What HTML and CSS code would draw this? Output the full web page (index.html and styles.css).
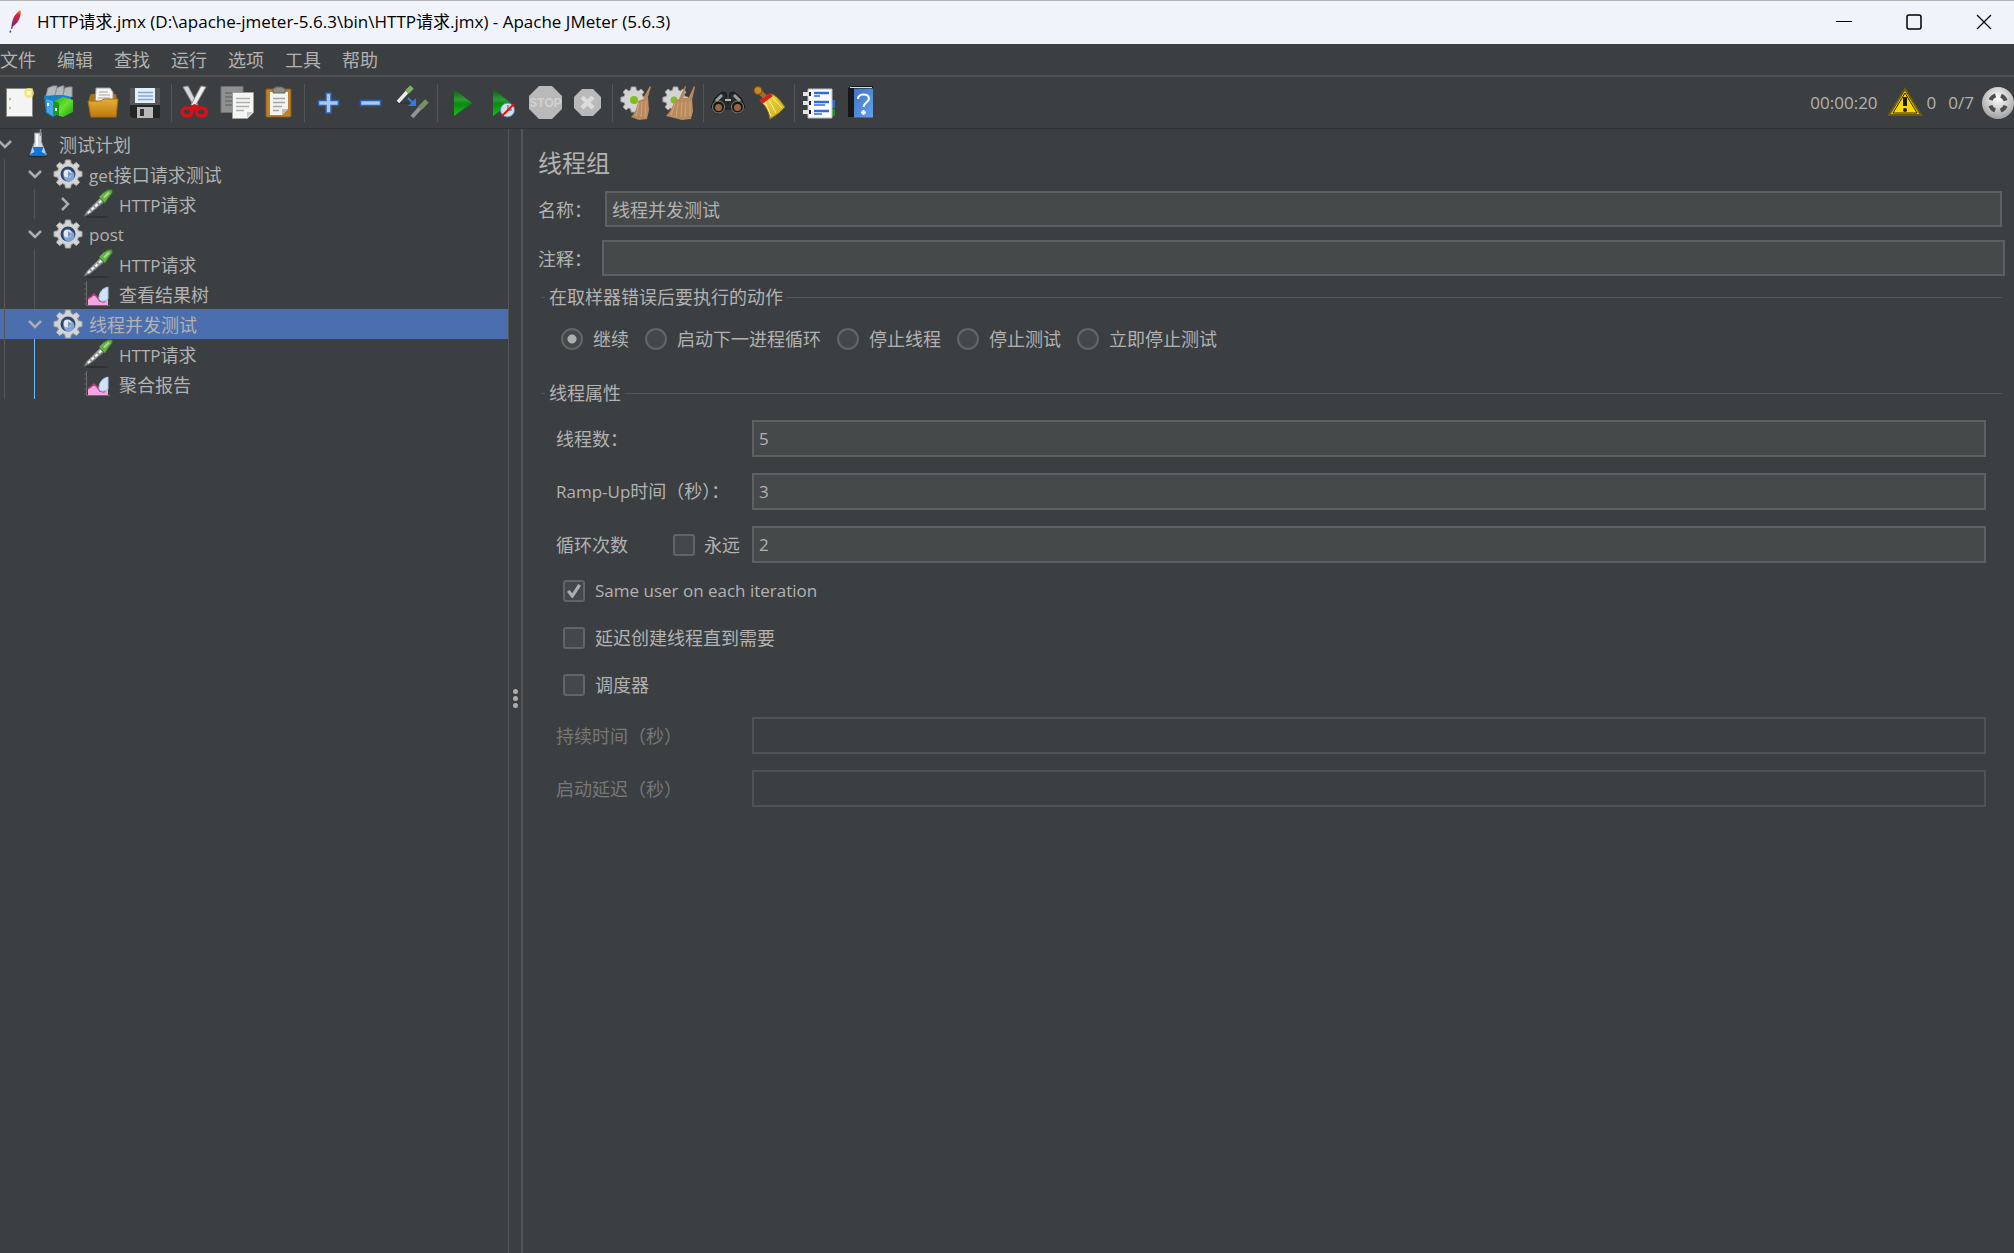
FILE: index.html
```html
<!DOCTYPE html>
<html lang="zh-CN">
<head>
<meta charset="utf-8">
<title>HTTP请求.jmx - Apache JMeter (5.6.3)</title>
<link rel="stylesheet" href="styles.css">
</head>
<body>
<svg class="defs" aria-hidden="true">
  <defs>
    <linearGradient id="gPlay" x1="0" y1="0" x2="0" y2="1"><stop offset="0" stop-color="#0a5c12"/><stop offset=".4" stop-color="#2c9a34"/><stop offset=".55" stop-color="#0a8a10"/><stop offset="1" stop-color="#12c412"/></linearGradient>
    <linearGradient id="gFolder" x1="0" y1="0" x2="0" y2="1"><stop offset="0" stop-color="#e8ad35"/><stop offset="1" stop-color="#b87a10"/></linearGradient>
    <linearGradient id="gBroom" x1="0" y1="0" x2="1" y2="1"><stop offset="0" stop-color="#f4e04a"/><stop offset="1" stop-color="#c9a514"/></linearGradient>
    <linearGradient id="gHelp" x1="0" y1="0" x2="1" y2="1"><stop offset="0" stop-color="#3f74c4"/><stop offset="1" stop-color="#62a0ea"/></linearGradient>
    <linearGradient id="gGreen" x1="0" y1="0" x2="1" y2="1"><stop offset="0" stop-color="#1fb01a"/><stop offset=".5" stop-color="#6be02c"/><stop offset="1" stop-color="#1c9a14"/></linearGradient>
    <linearGradient id="gFeather" x1="0" y1="1" x2="0" y2="0"><stop offset="0" stop-color="#5b2a78"/><stop offset=".4" stop-color="#b01f5e"/><stop offset=".7" stop-color="#d8232e"/><stop offset="1" stop-color="#f69923"/></linearGradient>
    <radialGradient id="gBall" cx=".5" cy=".35" r=".7"><stop offset="0" stop-color="#fff"/><stop offset="1" stop-color="#9a9a9a"/></radialGradient>
    <symbol id="gear" viewBox="0 0 30 30">
      <path d="M12.500 1h5l.7 3.600 2.200.9 3-2.100 3.200 3.200-2.100 3 .9 2.200 3.600.7v5l-3.600.7-.9 2.200 2.100 3-3.200 3.200-3-2.100-2.200.9-.7 3.600h-5l-.7-3.600-2.200-.9-3 2.100-3.200-3.200 2.100-3-.9-2.200L1 17.500v-5l3.600-.7.9-2.200-2.100-3 3.200-3.200 3 2.100 2.200-.9z" fill="#d4d4d4" stroke="#a4a4a4"/>
      <circle cx="15" cy="15" r="7.500" fill="#2c4674"/><circle cx="16" cy="17" r="5.500" fill="#7ea3d8"/><circle cx="14.500" cy="14.500" r="4" fill="#e3e8ee"/><path d="M15 12l4 3-4 4z" fill="#7d95b8"/>
    </symbol>
    <symbol id="pipette" viewBox="0 0 30 30">
      <ellipse cx="14" cy="28" rx="12" ry="1" fill="#2e3132"/>
      <path d="M1 27l3-5L17 9l4 4L8 24l-6 3z" fill="#989b9a" stroke="#626665"/>
      <path d="M5 24l14-13" stroke="#fff" stroke-width="2" stroke-dasharray="3 2"/>
      <path d="M16 8l6 6 3-5 4-5V1h-4l-5 3z" fill="#68b048" stroke="#3e7f2c"/>
      <path d="M21 8.500l5-5" stroke="#a4dc88" stroke-width="2"/>
    </symbol>
    <symbol id="graph" viewBox="0 0 30 30">
      <path d="M3.500 2v24.500H27" fill="none" stroke="#6a6d6e"/><path d="M1 5h2M1 10h2M1 15h2M1 20h2M1 25h2" stroke="#5d6061"/>
      <path d="M5 26v-7l3-1 3-3 3 3 3 2 4-3 4-3v12z" fill="#f3a6e4"/><path d="M5 20l3-2 3-3 3 3 3 4 4 1 4-5" fill="none" stroke="#c8387f" stroke-width="1.500"/>
      <path d="M25 8v12c-3 3-9 3-9-1 0-6 4-10 9-11z" fill="#cfe4fb" stroke="#a5c5ec"/>
    </symbol>
    <symbol id="flask" viewBox="0 0 30 30">
      <ellipse cx="15" cy="27" rx="10" ry="1.500" fill="#252829"/>
      <path d="M11.500 4h7v9l5 13H7l4.500-13z" fill="#d5d9dc" stroke="#8f9496"/>
      <path d="M10 18h10l3 8.500H7z" fill="#1273de"/><path d="M7.500 25l2-7 2 5zM22.500 25l-2-7-2 5z" fill="#a9d2ff"/>
      <path d="M17.500 0v7" stroke="#8a8d8f" stroke-width="1.500"/><path d="M14 5v12" stroke="#fff" stroke-width="2"/>
    </symbol>
    <symbol id="down" viewBox="0 0 16 16"><path d="M2 5l6 6 6-6" fill="none" stroke="#adadad" stroke-width="2.500"/></symbol>
    <symbol id="right" viewBox="0 0 16 16"><path d="M5 2l6 6-6 6" fill="none" stroke="#adadad" stroke-width="2.500"/></symbol>
  </defs>
</svg>

<header class="titlebar">
  <svg class="feather" width="14" height="26" viewBox="0 0 14 26"><path d="M1 23.500L3.500 17" stroke="#4b3f8c" stroke-width="1.500" stroke-dasharray="2 2"/><path d="M2.500 18.500C2.500 11 6 4 11.500 1c1 4-1 12-7 16z" fill="url(#gFeather)"/></svg>
  <h1 class="title">HTTP请求.jmx (D:\apache-jmeter-5.6.3\bin\HTTP请求.jmx) - Apache JMeter (5.6.3)</h1>
  <div class="window-controls">
    <button aria-label="最小化"><svg width="16" height="16"><path d="M0 7.500h16" stroke="#000"/></svg></button>
    <button aria-label="最大化"><svg width="16" height="16"><rect x="1" y="1" width="14" height="14" rx="2" fill="none" stroke="#000" stroke-width="1.500"/></svg></button>
    <button aria-label="关闭"><svg width="16" height="16"><path d="M1 1l14 14M15 1L1 15" stroke="#000" stroke-width="1.250"/></svg></button>
  </div>
</header>

<nav class="menubar">
  <button>文件</button><button>编辑</button><button>查找</button><button>运行</button><button>选项</button><button>工具</button><button>帮助</button>
</nav>

<div class="toolbar" role="toolbar">
  <button aria-label="新建"><svg viewBox="0 0 34 34"><path d="M2.500 2.500h26v28h-26z" fill="#f4f4f4" stroke="#8b8b85"/><path d="M5 12l2 1-2 1M5 21l2 1-2 1" stroke="#aaa" fill="none"/><circle cx="25" cy="7" r="5" fill="#f3e36a" opacity=".8"/><circle cx="25" cy="7" r="2" fill="#fffbd0"/></svg></button>
  <button aria-label="模板"><svg viewBox="0 0 34 34"><path d="M-2 10l11-5 16-4v20L7 31l-7-4z" fill="#1d7fc4"/><path d="M0 10l2-8 5-2h4l-2 9M9 9l2-7 5-2h2l-1 9M17 9l2-7 4-1h3v10" fill="#b3b9bc" stroke="#8d9498"/><path d="M0 13l7 2v15l-6-4z" fill="#48a7e8"/><path d="M8 15l9-4 10 3v12l-10 5-9-3z" fill="url(#gGreen)"/><path d="M8 15l5 2v13l-5-2z" fill="#159a1c"/><path d="M10 22v3M2 17v3" stroke="#fff" stroke-width="2"/></svg></button>
  <button aria-label="打开"><svg viewBox="0 0 34 34"><path d="M1 12l2-4h25l1 7v14H2z" fill="#a8731a"/><path d="M8 2h14l3 4v12H7z" fill="#f4f4f4" stroke="#999"/><path d="M11 6h9M11 9h11M10 12h12" stroke="#a5a5a5"/><path d="M0 15h13l3-2h14l-2 18H3z" fill="url(#gFolder)" stroke="#a96f0c"/></svg></button>
  <button aria-label="保存"><svg viewBox="0 0 34 34"><path d="M0 2h30v30H2l-2-2z" fill="#55565a"/><path d="M0 19h30v13H2l-2-2z" fill="#242527"/><path d="M5 2h20v15H5z" fill="#e4effa"/><path d="M8 6.500h15M8 10h15M8 13.500h15" stroke="#86a9d2" stroke-width="1.500"/><path d="M7 21h16v11H7z" fill="#b9b9b7"/><path d="M10 23h4v7h-4z" fill="#343434"/></svg></button>
  <span class="sep"></span>
  <button aria-label="剪切"><svg viewBox="0 0 34 34"><path d="M4 1l5-1 10 19-3 3z" fill="#d8d8d8" stroke="#8d8d8d"/><path d="M27 1l-5-1-10 19 3 3z" fill="#efefef" stroke="#8d8d8d"/><ellipse cx="8" cy="26" rx="5" ry="4" fill="none" stroke="#d41217" stroke-width="3.500"/><ellipse cx="22.500" cy="26" rx="5" ry="4" fill="none" stroke="#d41217" stroke-width="3.500"/><path d="M9 21l6.500-3 6.500 3-6.500 4z" fill="#d41217"/></svg></button>
  <button aria-label="复制"><svg viewBox="0 0 34 34"><path d="M0 .5h22v26H0z" fill="#8f9191" stroke="#6f7171"/><path d="M4 7h13M4 11h8M4 15h7M4 19h7" stroke="#6b6d6d" stroke-width="1.500"/><path d="M11.500 6.500h21v20l-6 6h-15z" fill="#f5f5f3" stroke="#9d9d9b"/><path d="M15 12.500h14M15 16.500h14M15 20.500h13M15 24.500h8" stroke="#b0b0ae" stroke-width="1.500"/><path d="M26 32v-6h6z" fill="#c9c9c7"/></svg></button>
  <button aria-label="粘贴"><svg viewBox="0 0 34 34"><rect x="3" y="3" width="25" height="28" rx="1" fill="#c0812a" stroke="#8a5a14"/><path d="M7 6h18v17l-6 6H7z" fill="#f3f3f1"/><path d="M10 3l3-2h6l3 2v4H10z" fill="#8a8c86" stroke="#666862"/><path d="M10 12.500h12M10 16.500h12M10 20.500h9M10 24.500h6" stroke="#a5a5a3" stroke-width="1.500"/><path d="M19 29v-6h6z" fill="#bdbdbb"/></svg></button>
  <span class="sep"></span>
  <button aria-label="展开"><svg viewBox="0 0 34 34"><path d="M14 7h5v7.500h7.500v5H19V27h-5v-7.500H6.500v-5H14z" fill="#a9c8ec" stroke="#2b62b0" stroke-width="1.500"/></svg></button>
  <button aria-label="折叠"><svg viewBox="0 0 34 34"><path d="M6.500 14.500h20v5h-20z" fill="#a9c8ec" stroke="#2b62b0" stroke-width="1.500"/></svg></button>
  <button aria-label="切换"><svg viewBox="0 0 34 34"><path d="M1 17h13" stroke="#2a2c2d"/><path d="M2 16L11 6" stroke="#ececec" stroke-width="3.500"/><path d="M11 6l5-5" stroke="#7bb35f" stroke-width="5"/><path d="M12 12l6 6" stroke="#2c7be8" stroke-width="2"/><path d="M20 12v8h-8z" fill="#2c7be8"/><path d="M16 31l8-9" stroke="#a9aba9" stroke-width="4" opacity=".8"/><path d="M24 22l7-7" stroke="#82a973" stroke-width="5" opacity=".8"/></svg></button>
  <span class="sep"></span>
  <button aria-label="启动"><svg viewBox="0 0 34 34"><path d="M9 3l18 14L9 30z" fill="url(#gPlay)"/></svg></button>
  <button aria-label="不停顿开始"><svg viewBox="0 0 34 34"><path d="M6 3l18 14L6 30z" fill="url(#gPlay)"/><circle cx="20.500" cy="24" r="7" fill="#cfe0ef" stroke="#5f89ad"/><path d="M21 19v5h4" stroke="#456" fill="none"/><path d="M15 30l12-12" stroke="#e01515" stroke-width="2"/></svg></button>
  <button aria-label="停止"><svg viewBox="0 0 34 34"><path d="M10 0h13l10 10v13L23 33H10L0 23V10z" fill="#b9b9b9"/><text x="16.500" y="21" text-anchor="middle" class="stop-text">STOP</text></svg></button>
  <button aria-label="关闭线程"><svg viewBox="0 0 34 34"><path d="M11 3h11l8 8v11l-8 8H11l-8-8V11z" fill="#b9b9b9"/><path d="M11 11l11 11M22 11L11 22" stroke="#dcdcdc" stroke-width="4.500"/></svg></button>
  <span class="sep"></span>
  <button aria-label="清除"><svg viewBox="0 0 34 34"><use href="#gear" x="0" y="0" width="27" height="27"/><circle cx="14" cy="14" r="8" fill="#d4d6d2"/><circle cx="14" cy="14" r="4" fill="#7fc01c"/><path d="M30 0l1 1-4 13-4-2z" fill="#b5875a"/><path d="M18 15l10-4 1 13-2 9-8 1-8-3c4-4 6-9 7-16z" fill="#b98a5e"/><path d="M19 17l-3 13M22 16l-1 15M26 15l-1 16" stroke="#d3a878"/></svg></button>
  <button aria-label="清除全部"><svg viewBox="0 0 34 34"><use href="#gear" x="0" y="0" width="27" height="27"/><circle cx="14" cy="14" r="8" fill="#d4d6d2"/><circle cx="12" cy="14" r="3.500" fill="#7fc01c"/><path d="M23 0h1l-3 14-4-1zM32 0l1 1-3 13-4-1z" fill="#b5875a"/><path d="M12 15l8-3h10l1 13-2 8-9 1-16-4c4-4 7-9 8-15z" fill="#b98a5e"/><path d="M13 17l-4 12M16 17l-2 14M20 16l-1 15M24 16l-1 15M28 15v15" stroke="#d3a878"/></svg></button>
  <span class="sep"></span>
  <button aria-label="查找"><svg viewBox="0 0 34 34"><path d="M4 12l7-6 4 1v7h4V7l4-1 7 6 4 9-6 7-8-5h-6l-8 5-6-7z" fill="#292a2a" stroke="#171717"/><path d="M5 15l6-6M29 15l-6-6" stroke="#9b9d9d" stroke-width="3"/><circle cx="7.500" cy="21" r="6" fill="#161616" stroke="#818282"/><circle cx="26.500" cy="21" r="6" fill="#161616" stroke="#818282"/><circle cx="7.500" cy="21.500" r="3.500" fill="#9a6543"/><circle cx="26.500" cy="21.500" r="3.500" fill="#9a6543"/><path d="M14 14h6" stroke="#b5b5b5" stroke-width="2"/></svg></button>
  <button aria-label="重置查找"><svg viewBox="0 0 34 34"><path d="M8 16l10-8c5 1 9 6 14 13l-6 6-9 6c-1-7-4-13-9-17z" fill="url(#gBroom)" stroke="#8c7413"/><path d="M12 16l6 14M16 14l7 13M19 11l10 11" stroke="#fbf3a0"/><path d="M6 14l10-7 4 3-11 8z" fill="#cf2222"/><path d="M5 4l7 7" stroke="#a8691c" stroke-width="5"/><circle cx="5" cy="4.500" r="4" fill="#c98830" stroke="#7c4d12"/></svg></button>
  <span class="sep"></span>
  <button aria-label="函数助手"><svg viewBox="0 0 34 34"><path d="M27 14h6v8h-6z" fill="#2e6fd0"/><path d="M27 23h6v7h-6z" fill="#179a1c"/><path d="M6 3h24v29H6z" fill="#fbfbfb" stroke="#bbb"/><path d="M12 7h15M12 16h15M12 25h15" stroke="#2d6be0" stroke-width="2.500"/><path d="M12 10h6M12 19h11M12 28h8" stroke="#2d6be0" stroke-width="1.500"/><path d="M1 8h8M1 17h8M1 26h8" stroke="#e3e3e3" stroke-width="4"/><path d="M8 6v4M8 15v4M8 24v4" stroke="#222" stroke-width="2"/></svg></button>
  <button aria-label="帮助"><svg viewBox="0 0 34 34"><path d="M4 2l4-2h21v31H4z" fill="#171717"/><path d="M10 2.500h19v29H10z" fill="url(#gHelp)"/><path d="M6 1.500h22" stroke="#d7dbe0"/><path d="M14 13c0-6 11-6 11-.5 0 4-5.500 4-5.500 8.500M19.500 24v5M17 26.500h5" fill="none" stroke="#fff" stroke-width="2"/></svg></button>
  <div class="status">
    <span class="elapsed">00:00:20</span>
    <svg class="warn" viewBox="0 0 34 34"><path d="M17 3L1 29h32z" fill="#f2c600" stroke="#6d5d08" stroke-width="2"/><path d="M17 7L5 27h24z" fill="#fcd700" stroke="#302a05"/><path d="M17 11v9" stroke="#1c1c1c" stroke-width="4"/><circle cx="17" cy="24" r="2" fill="#1c1c1c"/></svg>
    <span class="errors">0</span>
    <span class="threads">0/7</span>
    <svg class="ball" viewBox="0 0 34 34"><circle cx="18" cy="17" r="16" fill="url(#gBall)"/><circle cx="18" cy="17" r="8" fill="none" stroke="#4d4d4d" stroke-width="4" stroke-dasharray="7 5.566" stroke-dashoffset="-2.800"/></svg>
  </div>
</div>

<main class="workspace">
  <aside class="tree" role="tree">
    <div class="node" role="treeitem"><svg class="arrow"><use href="#down"/></svg><svg class="icon"><use href="#flask"/></svg><span class="text">测试计划</span></div>
    <div class="node" role="treeitem"><i class="guide"></i><svg class="arrow"><use href="#down"/></svg><svg class="icon"><use href="#gear"/></svg><span class="text"><span class="latin">get</span>接口请求测试</span></div>
    <div class="node" role="treeitem"><i class="guide"></i><i class="guide"></i><svg class="arrow"><use href="#right"/></svg><svg class="icon"><use href="#pipette"/></svg><span class="text"><span class="latin">HTTP</span>请求</span></div>
    <div class="node" role="treeitem"><i class="guide"></i><svg class="arrow"><use href="#down"/></svg><svg class="icon"><use href="#gear"/></svg><span class="text latin">post</span></div>
    <div class="node" role="treeitem"><i class="guide"></i><i class="guide"></i><i class="arrow"></i><svg class="icon"><use href="#pipette"/></svg><span class="text"><span class="latin">HTTP</span>请求</span></div>
    <div class="node" role="treeitem"><i class="guide"></i><i class="guide"></i><i class="arrow"></i><svg class="icon"><use href="#graph"/></svg><span class="text">查看结果树</span></div>
    <div class="node selected" role="treeitem" aria-selected="true"><i class="guide"></i><svg class="arrow"><use href="#down"/></svg><svg class="icon"><use href="#gear"/></svg><span class="text">线程并发测试</span></div>
    <div class="node" role="treeitem"><i class="guide"></i><i class="guide active"></i><i class="arrow"></i><svg class="icon"><use href="#pipette"/></svg><span class="text"><span class="latin">HTTP</span>请求</span></div>
    <div class="node" role="treeitem"><i class="guide"></i><i class="guide active"></i><i class="arrow"></i><svg class="icon"><use href="#graph"/></svg><span class="text">聚合报告</span></div>
  </aside>
  <div class="splitter"><i></i><i></i><i></i></div>

  <form class="panel">
    <h2>线程组</h2>
    <div class="line name"><label for="name">名称：</label><input id="name" type="text" value="线程并发测试"></div>
    <div class="line comment"><label for="comment">注释：</label><input id="comment" type="text"></div>

    <fieldset class="group">
      <legend>在取样器错误后要执行的动作</legend>
      <div class="radios">
        <label><input type="radio" name="action" checked>继续</label>
        <label><input type="radio" name="action">启动下一进程循环</label>
        <label><input type="radio" name="action">停止线程</label>
        <label><input type="radio" name="action">停止测试</label>
        <label><input type="radio" name="action">立即停止测试</label>
      </div>
    </fieldset>

    <fieldset class="group">
      <legend>线程属性</legend>
      <div class="props">
        <div class="prop"><label for="threads">线程数：</label><input id="threads" class="num" type="text" value="5"></div>
        <div class="prop"><label for="ramp"><span class="latin">Ramp-Up</span>时间（秒）：</label><input id="ramp" class="num" type="text" value="3"></div>
        <div class="prop"><label for="loops">循环次数</label><label class="forever"><input type="checkbox">永远</label><input id="loops" class="num" type="text" value="2"></div>
      </div>
      <div class="checks">
        <label class="latin"><input type="checkbox" checked>Same user on each iteration</label>
        <label><input type="checkbox">延迟创建线程直到需要</label>
        <label><input type="checkbox">调度器</label>
      </div>
      <div class="props">
        <div class="prop disabled"><label for="duration">持续时间（秒）</label><input id="duration" type="text" disabled></div>
        <div class="prop disabled"><label for="delay">启动延迟（秒）</label><input id="delay" type="text" disabled></div>
      </div>
    </fieldset>
  </form>
</main>
</body>
</html>
```
FILE: styles.css
```css
* { box-sizing: border-box; }

body {
  margin: 0;
  min-height: 100vh;
  display: flex;
  flex-direction: column;
  background: #3c3f41;
  color: #b2b2b2;
  font: 18px/24px "Open Sans", "Noto Sans CJK SC", sans-serif;
}

button, input { font: inherit; color: inherit; }
button { border: 0; padding: 0; background: none; }
.defs { position: absolute; width: 0; height: 0; }
.latin { font-size: 17px; }

/* Title bar */
.titlebar {
  display: flex;
  align-items: center;
  height: 44px;
  padding: 0 0 2px 9px;
  border-top: 1px solid #b5b5b8;
  background: #f0f3fa;
  color: #000;
}
.title { margin: 0 0 0 14px; font-size: 17px; font-weight: 400; }
.window-controls { display: flex; gap: 10px; margin-left: auto; }
.window-controls button { display: grid; place-items: center; width: 60px; height: 40px; }

/* Menu bar */
.menubar {
  display: flex;
  gap: 21px;
  height: 33px;
  border-bottom: 2px solid #515151;
}

/* Toolbar */
.toolbar {
  display: flex;
  align-items: center;
  height: 52px;
  border-bottom: 1px solid #323232;
}
.toolbar button { display: grid; place-items: center; width: 42px; height: 42px; }
.toolbar svg { display: block; width: 34px; height: 34px; overflow: visible; }
.sep { width: 1px; height: 38px; margin: 0 3px; background: #555; }
.stop-text { font: 700 12px "Liberation Sans", sans-serif; fill: #d2d2d2; }
.status { display: flex; align-items: center; margin-left: auto; font-size: 17px; }
.warn { margin: 0 5px 0 10px; }
.threads { margin: 0 6px 0 12px; }

/* Workspace */
.workspace { display: flex; flex: 1; }

.tree { width: 508px; }
.node { display: flex; align-items: center; height: 30px; white-space: nowrap; }
.node.selected { background: #4b6eaf; }
.text { padding-top: 2px; }
.guide { align-self: stretch; width: 30px; background: linear-gradient(#555, #555) 4px 0 / 1px 100% no-repeat; }
.guide.active { background-image: linear-gradient(#6cb8ff, #6cb8ff); }
.arrow { flex: none; width: 16px; height: 16px; margin: 0 10px 0 -3px; }
.icon { flex: none; width: 30px; height: 30px; margin-right: 6px; }

.splitter {
  display: flex;
  flex-direction: column;
  align-items: center;
  justify-content: center;
  gap: 2px;
  width: 15px;
  padding-top: 14px;
  border-left: 1px solid #555;
  border-right: 2px solid #555;
}
.splitter i { width: 5px; height: 5px; border-radius: 50%; background: #adadad; }

/* Thread group editor */
.panel { flex: 1; padding: 18px 9px 0 15px; }
.panel h2 { margin: 0 0 12px; font-size: 24px; line-height: 32px; font-weight: 400; }
.line { display: flex; align-items: center; }
.line label { padding-top: 2px; }
.name { gap: 13px; margin: 0 3px 13px 0; }
.comment { gap: 10px; margin-bottom: 9px; }
input[type="text"] {
  flex: 1;
  min-width: 0;
  height: 36px;
  padding: 0 5px;
  border: 2px solid #5e6162;
  border-radius: 0;
  background: #45494a;
}
input[type="text"].num { font-size: 17px; }
input[type="text"]:disabled { background: transparent; border-color: #505253; }

.group { margin: 0 3px; padding: 0 16px 0 15px; border: 0; }
.group legend {
  display: flex;
  align-items: center;
  gap: 4px;
  width: calc(100% + 31px);
  margin: 0 -16px 0 -15px;
  padding: 0;
}
.group legend::before { content: ""; width: 4px; height: 1px; background: #555; }
.group legend::after { content: ""; flex: 1; height: 1px; background: #555; }

.radios { display: flex; gap: 16px; padding: 18px 0 30px 5px; }
.radios label, .checks label { display: flex; align-items: center; gap: 10px; }
.forever { display: flex; align-items: center; gap: 9px; }
input[type="radio"], input[type="checkbox"] {
  appearance: none;
  width: 22px;
  height: 22px;
  margin: 0;
  border: 2px solid #626566;
  background: #43494a;
}
input[type="radio"] { border-radius: 50%; }
input[type="radio"]:checked { background: radial-gradient(circle, #adadad 0 4px, #43494a 5px); }
input[type="checkbox"] { display: grid; place-items: center; border-radius: 3px; }
input[type="checkbox"]:checked::before {
  content: "";
  width: 14px;
  height: 14px;
  background: #adadad;
  clip-path: polygon(0 55%, 18% 42%, 38% 66%, 80% 0, 100% 12%, 42% 100%, 34% 100%);
}

.props { display: flex; flex-direction: column; gap: 16px; padding-top: 15px; }
.prop { display: grid; grid-template-columns: 117px 79px 1fr; align-items: center; }
.prop label { white-space: nowrap; }
.prop input[type="text"] { grid-column: 3; height: 37px; }
.prop.disabled { color: #777; }
.checks { display: flex; flex-direction: column; gap: 23px; padding: 16px 0 5px 7px; }
```
